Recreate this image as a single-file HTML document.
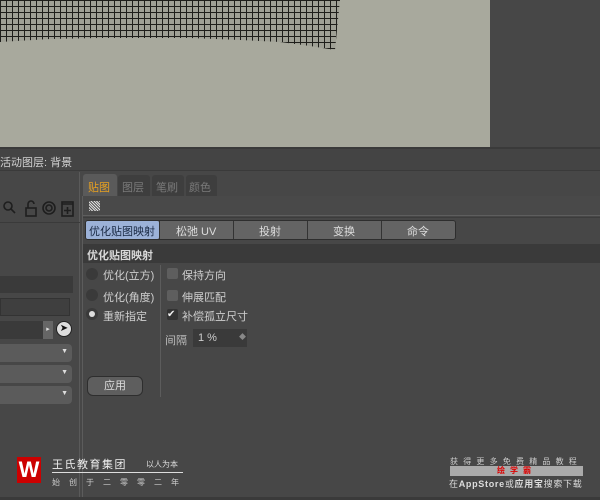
<!DOCTYPE html>
<html><head><meta charset="utf-8"><style>
*{margin:0;padding:0;box-sizing:border-box}
body{width:600px;height:500px;overflow:hidden;background:#474747;font-family:"Liberation Sans","Noto Sans CJK SC",sans-serif;font-size:11px;color:#cfcfcf;position:relative}
.a{position:absolute}
.t{position:absolute;white-space:nowrap}
</style></head><body>
<!-- viewport -->
<div class="a" style="left:0;top:0;width:490px;height:147px;background:#a8a99d"></div>
<svg class="a" style="left:0;top:0" width="345" height="55">
<defs><pattern id="g" width="6" height="6" patternUnits="userSpaceOnUse"><rect width="6" height="6" fill="#9fa095"/><path d="M0 .5H6M.5 0V6" stroke="#1e1e1a" stroke-width="1"/></pattern>
<clipPath id="c"><path d="M0 0H340L338 20L335 50L310 46L280 42L240 40L190 38L100 38L50 39L0 42Z"/></clipPath></defs>
<rect width="345" height="55" fill="url(#g)" clip-path="url(#c)"/>
</svg>
<div class="a" style="left:490px;top:0;width:110px;height:147px;background:#474747"></div>
<!-- top bar -->
<div class="a" style="left:0;top:147px;width:600px;height:24px;background:#444;border-top:2px solid #3a3a3a;border-bottom:1px solid #3a3a3a"></div>
<div class="t" style="left:0;top:154px;color:#d0d0d0;font-size:11px">活动图层: 背景</div>
<!-- left panel -->
<div class="a" style="left:0;top:172px;width:82px;height:328px;background:#474747"></div>
<div class="a" style="left:79px;top:172px;width:1px;height:328px;background:#5a5a5a"></div>
<svg class="a" style="left:0;top:198px" width="80" height="22" fill="none" stroke="#1e1e1e" stroke-width="1.6">
<circle cx="8" cy="8" r="4"/><path d="M11 11L15 15"/>
<rect x="26" y="10" width="10" height="8"/><path d="M28 10V6a3 3 0 0 1 6 0"/>
<circle cx="49" cy="10" r="6"/><circle cx="49" cy="10" r="3"/>
<rect x="62" y="4" width="11" height="14"/><path d="M62 6H73M67.5 9V16M64 12.5H71"/>
</svg>
<div class="a" style="left:0;top:222px;width:80px;height:1px;background:#3a3a3a"></div>
<div class="a" style="left:0;top:276px;width:73px;height:17px;background:#3a3a3a"></div>
<div class="a" style="left:0;top:298px;width:70px;height:18px;background:#3f3f3f;border:1px solid #333"></div>
<div class="a" style="left:0;top:321px;width:43px;height:18px;background:#3a3a3a"></div>
<div class="a" style="left:43px;top:321px;width:10px;height:18px;background:#666;color:#ddd;font-size:7px;line-height:18px;text-align:center">▸</div>
<div class="a" style="left:56px;top:321px;width:16px;height:16px;background:#ddd;border-radius:50%;border:1px solid #222;color:#111;font-size:10px;line-height:14px;text-align:center">➤</div>
<div class="a" style="left:0;top:344px;width:72px;height:18px;background:#5b5b5b;border-radius:0 4px 4px 0"><span class="a" style="right:4px;top:4px;font-size:7px;color:#ddd">▼</span></div>
<div class="a" style="left:0;top:365px;width:72px;height:18px;background:#5b5b5b;border-radius:0 4px 4px 0"><span class="a" style="right:4px;top:4px;font-size:7px;color:#ddd">▼</span></div>
<div class="a" style="left:0;top:386px;width:72px;height:18px;background:#5b5b5b;border-radius:0 4px 4px 0"><span class="a" style="right:4px;top:4px;font-size:7px;color:#ddd">▼</span></div>
<!-- tabs -->
<div class="a" style="left:83px;top:174px;width:34px;height:23px;background:#5a5a5a;border-radius:3px 3px 0 0"></div>
<div class="t" style="left:88px;top:179px;color:#e6a020;font-size:11px">贴图</div>
<div class="a" style="left:118px;top:175px;width:32px;height:21px;background:#3e3e3e;border-radius:3px 3px 0 0"></div>
<div class="t" style="left:122px;top:179px;color:#7a7a7a">图层</div>
<div class="a" style="left:152px;top:175px;width:32px;height:21px;background:#3e3e3e;border-radius:3px 3px 0 0"></div>
<div class="t" style="left:156px;top:179px;color:#7a7a7a">笔刷</div>
<div class="a" style="left:186px;top:175px;width:31px;height:21px;background:#3e3e3e;border-radius:3px 3px 0 0"></div>
<div class="t" style="left:189px;top:179px;color:#7a7a7a">颜色</div>
<!-- panel -->
<div class="a" style="left:82px;top:196px;width:518px;height:304px;background:#474747;border-left:1px solid #5c5c5c"></div>
<div class="a" style="left:83px;top:196px;width:517px;height:20px;background:#494949;border-bottom:1px solid #5e5e5e"></div>
<div class="a" style="left:89px;top:201px;width:11px;height:10px;background:repeating-linear-gradient(45deg,#ddd 0 1px,#555 1px 2px)"></div>
<div class="a" style="left:83px;top:217px;width:517px;height:1px;background:#3c3c3c"></div>
<!-- button row -->
<div class="a" style="left:85px;top:220px;width:371px;height:20px;background:#646464;border:1px solid #2e2e2e;border-radius:3px"></div>
<div class="a" style="left:86px;top:221px;width:73px;height:18px;background:#9cb2d8;border-radius:2px"></div>
<div class="t" style="left:89px;top:223px;color:#1a2a44">优化贴图映射</div>
<div class="a" style="left:159px;top:221px;width:1px;height:18px;background:#333"></div>
<div class="t" style="left:176px;top:223px;color:#ddd">松弛 UV</div>
<div class="a" style="left:233px;top:221px;width:1px;height:18px;background:#333"></div>
<div class="t" style="left:259px;top:223px;color:#ddd">投射</div>
<div class="a" style="left:307px;top:221px;width:1px;height:18px;background:#333"></div>
<div class="t" style="left:333px;top:223px;color:#ddd">变换</div>
<div class="a" style="left:381px;top:221px;width:1px;height:18px;background:#333"></div>
<div class="t" style="left:407px;top:223px;color:#ddd">命令</div>
<div class="a" style="left:83px;top:244px;width:517px;height:19px;background:#3a3a3a"></div>
<div class="t" style="left:87px;top:247px;color:#d8d8d8;font-weight:bold">优化贴图映射</div>
<!-- options -->
<div class="a" style="left:160px;top:265px;width:1px;height:132px;background:#5c5c5c"></div>
<div class="a" style="left:86px;top:268px;width:12px;height:12px;border-radius:50%;background:#3a3a3a"></div>
<div class="t" style="left:103px;top:267px">优化(立方)</div>
<div class="a" style="left:86px;top:289px;width:12px;height:12px;border-radius:50%;background:#3a3a3a"></div>
<div class="t" style="left:103px;top:289px">优化(角度)</div>
<div class="a" style="left:86px;top:308px;width:12px;height:12px;border-radius:50%;background:#3a3a3a"><div class="a" style="left:3px;top:3px;width:6px;height:6px;border-radius:50%;background:#ddd"></div></div>
<div class="t" style="left:103px;top:308px">重新指定</div>
<div class="a" style="left:167px;top:268px;width:11px;height:11px;border-radius:2px;background:#5e5e5e"></div>
<div class="t" style="left:182px;top:267px">保持方向</div>
<div class="a" style="left:167px;top:290px;width:11px;height:11px;border-radius:2px;background:#5e5e5e"></div>
<div class="t" style="left:182px;top:289px">伸展匹配</div>
<div class="a" style="left:167px;top:309px;width:11px;height:11px;border-radius:2px;background:#333;color:#eee;font-size:10px;line-height:11px">✔</div>
<div class="t" style="left:182px;top:308px">补偿孤立尺寸</div>
<div class="t" style="left:165px;top:332px;color:#bbb">间隔</div>
<div class="a" style="left:193px;top:329px;width:54px;height:18px;background:#3a3a3a"></div>
<div class="t" style="left:198px;top:332px;color:#ccc">1 %</div>
<div class="t" style="left:239px;top:332px;color:#888;font-size:7px">◆</div>
<div class="a" style="left:87px;top:376px;width:56px;height:20px;background:#5e5e5e;border:1px solid #2e2e2e;border-radius:6px;text-align:center;line-height:18px;color:#ddd">应用</div>
<!-- logo -->
<div class="a" style="left:17px;top:457px;width:24px;height:26px;background:#c00;color:#fff;font-weight:bold;font-size:22px;line-height:26px;text-align:center">W</div>
<div class="t" style="left:52px;top:456px;color:#eee;font-size:11px;letter-spacing:1.5px">王氏教育集团</div>
<div class="t" style="left:146px;top:459px;color:#ddd;font-size:8px">以人为本</div>
<div class="a" style="left:52px;top:472px;width:131px;height:1px;background:#ddd"></div>
<div class="t" style="left:52px;top:477px;color:#ccc;font-size:8px;letter-spacing:9px">始创于二零零二年</div>
<div class="t" style="left:450px;top:456px;color:#ccc;font-size:8px;letter-spacing:5.2px">获得更多免费精品教程</div>
<div class="a" style="left:450px;top:466px;width:133px;height:10px;background:#aaa;text-align:center;color:#d00;font-size:8px;line-height:10px;font-weight:bold;letter-spacing:5px">绘学霸</div>
<div class="t" style="left:449px;top:477px;color:#ddd;font-size:9px;letter-spacing:0.7px">在<b>AppStore</b>或<b>应用宝</b>搜索下载</div>
<div class="a" style="left:0;top:497px;width:600px;height:3px;background:#3a3a3a"></div>
</body></html>
